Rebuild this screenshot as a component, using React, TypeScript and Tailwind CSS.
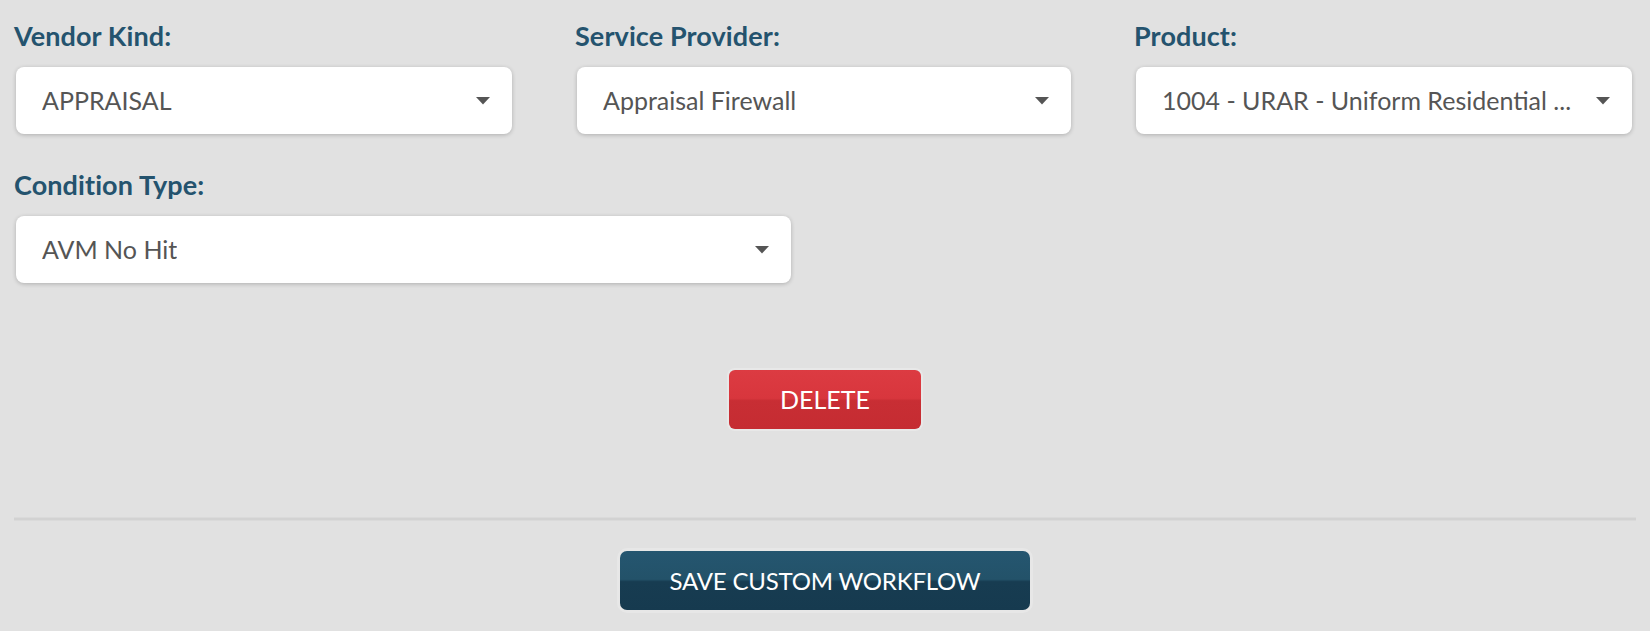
import React from "react";

const Caret = () => (
  <svg width="14" height="8" viewBox="0 0 14 8" className="shrink-0">
    <path d="M0 0 L14 0 L7 7.5 Z" fill="#555555" />
  </svg>
);

const Field = ({ label, value, className = "" }: { label: string; value: string; className?: string }) => (
  <div className={className}>
    <div className="text-[27px] leading-[30px] font-bold text-[#24536e] tracking-[0.1px]">{label}</div>
    <div className="mt-[16px] ml-[2px] h-[67px] bg-white rounded-[8px] shadow-[0_1px_4px_rgba(0,0,0,0.22)] flex items-center justify-between pl-[26px] pr-[22px]">
      <span className="text-[25px] text-[#555555] whitespace-nowrap overflow-hidden">{value}</span>
      <Caret />
    </div>
  </div>
);

export default function App() {
  return (
    <main className="w-[1650px] h-[631px] bg-[#e1e1e1] overflow-hidden" style={{ fontFamily: "Lato, 'Open Sans', sans-serif" }}>
      <div className="pt-[21px] pl-[14px] pr-[18px]">
        <div className="grid grid-cols-[498px_496px_498px] gap-x-[63px]">
          <Field label="Vendor Kind:" value="APPRAISAL" />
          <Field label="Service Provider:" value="Appraisal Firewall" />
          <Field label="Product:" value="1004 - URAR - Uniform Residential ..." />
        </div>
        <Field label="Condition Type:" value="AVM No Hit" className="mt-[36px] w-[777px]" />
      </div>

      <div className="flex justify-center mt-[87px]">
        <button className="w-[192px] h-[59px] rounded-[6px] text-white text-[25px] bg-[linear-gradient(to_bottom,#dc3b42_0%,#d8363d_48%,#c82e34_52%,#c52c32_100%)] shadow-[0_0_0_2px_rgba(255,255,255,0.25)]">
          DELETE
        </button>
      </div>

      <div className="mt-[88px] mx-[14px] h-[4px] bg-[#d2d2d2] border-y border-[#dadada]" />

      <div className="flex justify-center mt-[30px]">
        <button className="w-[410px] h-[59px] rounded-[7px] text-white text-[24px] tracking-[-0.2px] bg-[linear-gradient(to_bottom,#255670_0%,#235269_48%,#173c51_52%,#163a4f_100%)] shadow-[0_0_0_3px_rgba(255,255,255,0.2)]">
          SAVE CUSTOM WORKFLOW
        </button>
      </div>
    </main>
  );
}
